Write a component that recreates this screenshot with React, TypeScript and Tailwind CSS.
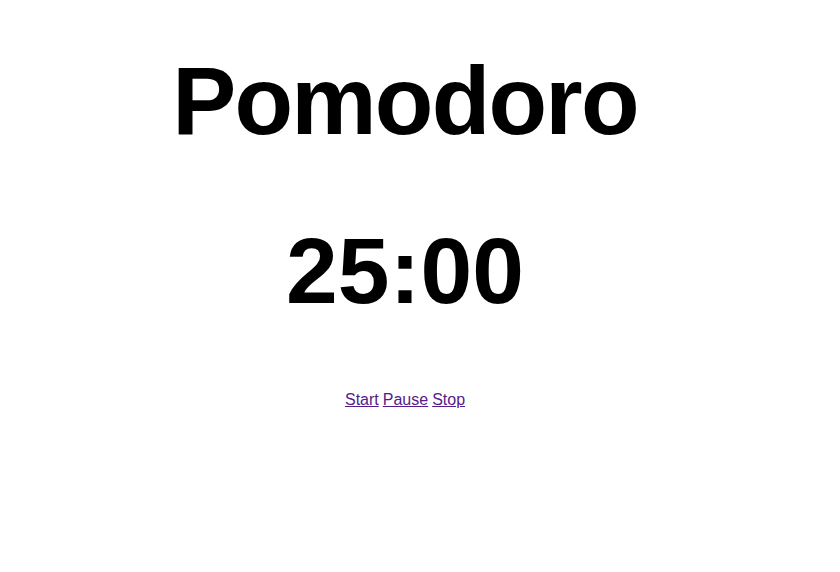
const App = () => {
  return (
    <div className="min-h-[572px] bg-white text-black font-['Liberation_Sans',Arial,sans-serif]">
      <div className="flex w-[810px] flex-col items-center pt-[53px]">
        <h1 className="text-[96px] font-bold leading-none tracking-[-1.8px]">Pomodoro</h1>
        <div className="mt-[76px] text-[93px] font-bold leading-none">25:00</div>
        <div className="mt-[70px] flex gap-[4px] text-base leading-6 text-[#551a8b]">
          <a href="#" className="underline">Start</a>
          <a href="#" className="underline">Pause</a>
          <a href="#" className="underline">Stop</a>
        </div>
      </div>
    </div>
  );
};

export default App;
